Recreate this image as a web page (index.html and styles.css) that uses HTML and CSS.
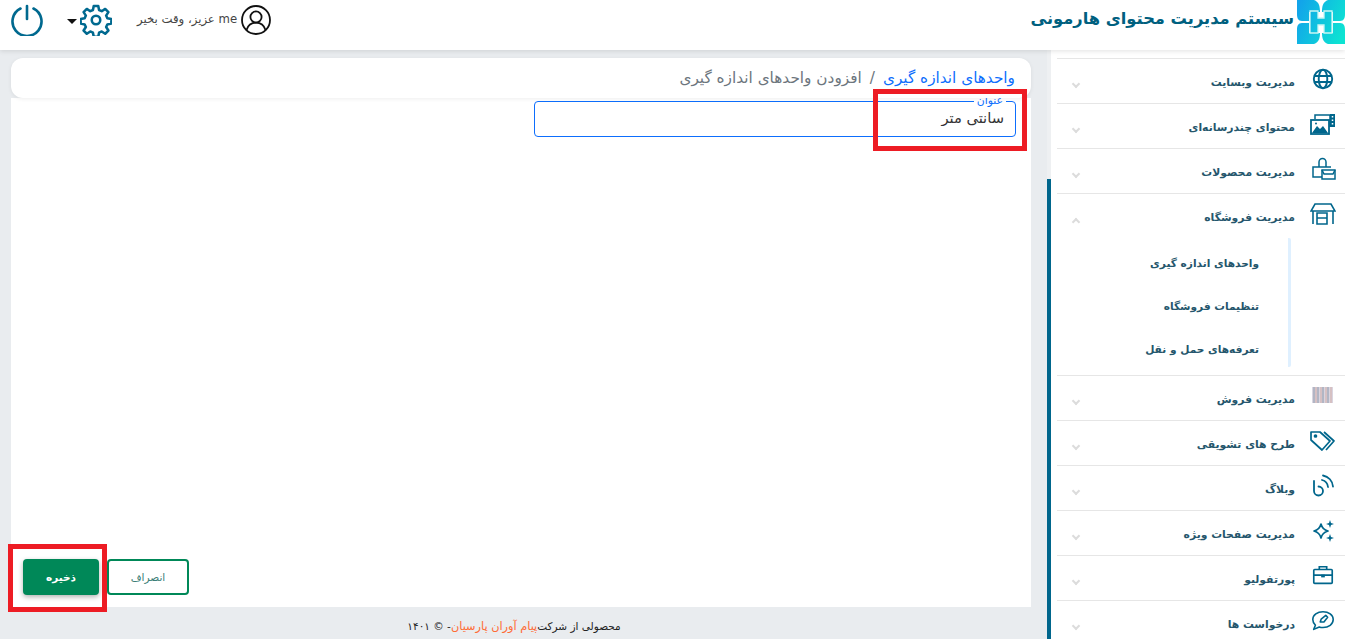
FILE: index.html
```html
<!DOCTYPE html>
<html lang="fa" dir="rtl">
<head>
    <meta charset="UTF-8">
    <meta name="viewport" content="width=device-width, initial-scale=1.0">
    <title>سیستم مدیریت محتوای هارمونی</title>
    <link rel="stylesheet" href="styles.css">
</head>
<body>
    <header class="topbar">
        <div class="brand">
            <svg class="brand-logo" viewBox="0 0 48 44">
                <defs>
                    <linearGradient id="logoGrad" gradientUnits="userSpaceOnUse" x1="0" y1="10" x2="48" y2="30">
                        <stop offset="0" stop-color="#12a4ea"/>
                        <stop offset="1" stop-color="#0de3d2"/>
                    </linearGradient>
                </defs>
                <path fill="url(#logoGrad)" d="M0 0H17C22 2 23 6 23 12H12V21H5C1 21 0 18 0 14Z"/>
                <path fill="url(#logoGrad)" d="M48 0H31C26 2 25 6 25 12H36V21H43C47 21 48 18 48 14Z"/>
                <path fill="url(#logoGrad)" d="M0 44H17C22 42 23 38 23 33H12V23H5C1 23 0 26 0 30Z"/>
                <path fill="url(#logoGrad)" d="M48 44H31C26 42 25 38 25 33H36V23H43C47 23 48 26 48 30Z"/>
                <path fill="url(#logoGrad)" stroke="#c9f6f4" stroke-width="1.300" d="M13 11H21V18H27V11H35V33H27V25H21V33H13Z"/>
            </svg>
            <span class="brand-name">سیستم مدیریت محتوای هارمونی</span>
        </div>
        <div class="top-tools">
            <div class="user-box">
                <svg class="user-icon" viewBox="0 0 30 30" fill="none" stroke="#111" stroke-width="1.800">
                    <circle cx="15" cy="15" r="14"/>
                    <circle cx="15" cy="12" r="5.600"/>
                    <path d="M5.500 25c1.500-5 5-7.400 9.500-7.400s8 2.400 9.500 7.400"/>
                </svg>
                <span class="user-text">me عزیز، وقت بخیر</span>
            </div>
            <svg class="gear-icon" viewBox="0 0 24 24" fill="none" stroke="#00698f" stroke-width="1.900" stroke-linejoin="round">
                <circle cx="12" cy="12" r="3.200"/>
                <path d="M10.300 1.500h3.400l.6 3 2 .9 2.600-1.700 2.400 2.400-1.700 2.600.9 2 3 .6v3.400l-3 .6-.9 2 1.700 2.600-2.400 2.400-2.600-1.700-2 .9-.6 3h-3.400l-.6-3-2-.9-2.600 1.700-2.400-2.400 1.700-2.600-.9-2-3-.6v-3.400l3-.6.9-2-1.700-2.600 2.400-2.400 2.600 1.700 2-.9z"/>
            </svg>
            <span class="caret"></span>
            <svg class="power-icon" viewBox="0 0 32 32" fill="none" stroke="#00698f" stroke-width="2.600" stroke-linecap="round">
                <path d="M16 2v13"/>
                <path d="M9.500 4.500a14.500 14.500 0 1 0 13 0"/>
            </svg>
        </div>
    </header>

    <div class="layout">
        <aside class="sidebar">
            <ul class="menu">
                <li class="menu-item">
                    <div class="menu-row">
                        <svg class="menu-icon" viewBox="0 0 24 24" fill="none" stroke="#00668c" stroke-width="1.900">
                            <circle cx="12" cy="12" r="9.200"/>
                            <ellipse cx="12" cy="12" rx="4.300" ry="9.200"/>
                            <path d="M3 9h18M3 15h18"/>
                        </svg>
                        <span class="menu-label">مدیریت وبسایت</span>
                        <span class="chev"></span>
                    </div>
                </li>
                <li class="menu-item">
                    <div class="menu-row">
                        <svg class="menu-icon" viewBox="0 0 26 24" fill="none" stroke="#00668c" stroke-width="1.500">
                            <path d="M5 7V3h15v12"/>
                            <rect x="20" y="2" width="5" height="13" fill="#00668c" stroke="none"/>
                            <path stroke="#fff" stroke-width="1.500" stroke-dasharray="1.500 2" d="M22.500 4v10"/>
                            <rect x="1" y="8" width="18" height="14" fill="#fff" stroke-width="1.800"/>
                            <path fill="#00668c" stroke="none" d="M2 21l5-7 3 3 3-3 5 7z"/>
                            <circle cx="6" cy="11.500" r="1" fill="#00668c" stroke="none"/>
                        </svg>
                        <span class="menu-label">محتوای چندرسانه‌ای</span>
                        <span class="chev"></span>
                    </div>
                </li>
                <li class="menu-item">
                    <div class="menu-row">
                        <svg class="menu-icon" viewBox="0 0 26 24" fill="none" stroke="#00668c" stroke-width="1.500">
                            <path d="M9 10V5a3.500 3.500 0 0 1 7 0v5"/>
                            <path d="M12 20H3V10h18"/>
                            <path d="M12 13h13v9H12z"/>
                            <path d="M12 13l2 4h9l2-4"/>
                        </svg>
                        <span class="menu-label">مدیریت محصولات</span>
                        <span class="chev"></span>
                    </div>
                </li>
                <li class="menu-item">
                    <div class="menu-row">
                        <svg class="menu-icon" viewBox="0 0 26 24" fill="none" stroke="#00668c" stroke-width="1.600">
                            <path d="M5 2h16l4 7H1z"/>
                            <path d="M3 9v13M23 9v13"/>
                            <path d="M7 22V11h10v11zM7 16h10"/>
                        </svg>
                        <span class="menu-label">مدیریت فروشگاه</span>
                        <span class="chev chev-up"></span>
                    </div>
                    <ul class="submenu">
                        <li>واحدهای اندازه گیری</li>
                        <li>تنظیمات فروشگاه</li>
                        <li>تعرفه‌های حمل و نقل</li>
                    </ul>
                </li>
                <li class="menu-item">
                    <div class="menu-row">
                        <svg class="menu-icon" viewBox="-2 -3 26 24">
                            <rect x="0" y="0" width="21" height="16" fill="#d9d5e0"/>
                            <path stroke-width="1" fill="none" stroke="#8a97aa" d="M2 0v16M6 0v16M11 0v16M16 0v16"/>
                            <path stroke-width="1" fill="none" stroke="#d3aca6" d="M4 0v16M9 0v16M14 0v16M19 0v16"/>
                        </svg>
                        <span class="menu-label">مدیریت فروش</span>
                        <span class="chev"></span>
                    </div>
                </li>
                <li class="menu-item">
                    <div class="menu-row">
                        <svg class="menu-icon" viewBox="0 0 26 22" fill="none" stroke="#00668c" stroke-width="1.700" stroke-linejoin="round">
                            <path d="M1 2h9l10 9-8 9-11-10z"/>
                            <path d="M14 2l10 9-8 9"/>
                            <circle cx="5.500" cy="6" r="1" fill="#00668c"/>
                        </svg>
                        <span class="menu-label">طرح های تشویقی</span>
                        <span class="chev"></span>
                    </div>
                </li>
                <li class="menu-item">
                    <div class="menu-row">
                        <svg class="menu-icon" viewBox="-2 0 26 24" fill="none" stroke="#00668c" stroke-width="1.800" stroke-linecap="round">
                            <path d="M2 7v10a4.500 4.500 0 1 0 4.500-4.500"/>
                            <path d="M10 6a8 8 0 0 1 6 7M11 1.500a12 12 0 0 1 10 11"/>
                        </svg>
                        <span class="menu-label">وبلاگ</span>
                        <span class="chev"></span>
                    </div>
                </li>
                <li class="menu-item">
                    <div class="menu-row">
                        <svg class="menu-icon" viewBox="-2 -1 26 24" fill="none" stroke="#00668c" stroke-width="1.700" stroke-linejoin="round">
                            <path d="M9 4c1 4 3 6 7 7-4 1-6 3-7 7-1-4-3-6-7-7 4-1 6-3 7-7z"/>
                            <path fill="#00668c" stroke="none" d="M18 0l1 3 3 1-3 1-1 3-1-3-3-1 3-1zM18 14l1 3 3 1-3 1-1 3-1-3-3-1 3-1z"/>
                        </svg>
                        <span class="menu-label">مدیریت صفحات ویژه</span>
                        <span class="chev"></span>
                    </div>
                </li>
                <li class="menu-item">
                    <div class="menu-row">
                        <svg class="menu-icon" viewBox="-2 -2 28 26" fill="none" stroke="#00668c" stroke-width="1.800">
                            <rect x="2" y="4" width="20" height="15" rx="1"/>
                            <path d="M8 4V1h8v3M2 10h20"/>
                            <path stroke-width="3" d="M10 11h4"/>
                        </svg>
                        <span class="menu-label">پورتفولیو</span>
                        <span class="chev"></span>
                    </div>
                </li>
                <li class="menu-item">
                    <div class="menu-row">
                        <svg class="menu-icon" viewBox="-2 -1 28 24" fill="none" stroke="#00668c" stroke-width="1.700" stroke-linejoin="round">
                            <path d="M12 1c6 0 11 3.500 11 8.500S18 18 12 18c-1.500 0-3-.2-4-.6L2 20l1.800-4.500C2 14 1 12 1 9.500 1 4.500 6 1 12 1z"/>
                            <path d="M9 12l1-3 5-4 2 2-4 5z"/>
                        </svg>
                        <span class="menu-label">درخواست ها</span>
                        <span class="chev"></span>
                    </div>
                </li>
            </ul>
            <div class="scroll-track"><div class="scroll-thumb"></div></div>
        </aside>

        <div class="main">
            <nav class="crumbs">
                <a class="crumb-link" href="#">واحدهای اندازه گیری</a>
                <span class="crumb-sep">/</span>
                <span class="crumb-current">افزودن واحدهای اندازه گیری</span>
            </nav>
            <section class="panel">
                <div class="field">
                    <span class="field-label">عنوان</span>
                    <input class="field-input" type="text" value="سانتی متر">
                </div>
                <div class="actions">
                    <button class="btn btn-outline">انصراف</button>
                    <button class="btn btn-save">ذخیره</button>
                </div>
            </section>
            <footer class="foot">
                <span>محصولی از شرکت</span><span class="foot-company">پیام آوران پارسیان</span><span>- © ۱۴۰۱</span>
            </footer>
        </div>
    </div>

    <div class="mark mark-field"></div>
    <div class="mark mark-save"></div>
</body>
</html>
```

FILE: styles.css
```css
* {
    box-sizing: border-box;
    margin: 0;
    padding: 0;
}

html, body {
    height: 100%;
    overflow: hidden;
}

body {
    position: relative;
    font-family: "DejaVu Sans", "Noto Sans", sans-serif;
    background-color: #e9ecef;
    color: #333;
    display: flex;
    flex-direction: column;
}

.topbar {
    height: 50px;
    flex: none;
    background-color: #fff;
    display: flex;
    justify-content: space-between;
    box-shadow: 0 1px 5px rgba(0, 0, 0, 0.12);
    position: relative;
    z-index: 2;
}

.brand {
    display: flex;
    align-items: flex-start;
    gap: 3px;
}

.brand-logo {
    width: 48px;
    height: 44px;
}

.brand-name {
    font-size: 16.300px;
    font-weight: bold;
    color: #00607f;
    margin-top: 9px;
}

.top-tools {
    display: flex;
    align-items: flex-start;
    padding-left: 11px;
}

.user-box {
    display: flex;
    align-items: center;
    gap: 4px;
    margin-top: 5px;
    margin-left: 25px;
}

.user-icon {
    width: 30px;
    height: 30px;
}

.user-text {
    font-size: 11.700px;
    color: #444;
    margin-bottom: 3px;
}

.gear-icon {
    width: 32px;
    height: 32px;
    margin-top: 4px;
}

.caret {
    width: 0;
    height: 0;
    margin: 19px 3px 0 24px;
    border-top: 5px solid #111;
    border-left: 5px solid transparent;
    border-right: 5px solid transparent;
}

.power-icon {
    width: 32px;
    height: 32px;
    margin-top: 4px;
}

.layout {
    flex: 1;
    min-height: 0;
    display: flex;
}

.sidebar {
    width: 298px;
    flex: none;
    background-color: #fff;
    position: relative;
    overflow: hidden;
    padding: 8px 0 0 10px;
}

.scroll-track {
    position: absolute;
    left: 0;
    top: 0;
    bottom: 0;
    width: 4px;
    background-color: #eef0f2;
}

.scroll-thumb {
    margin-top: 129px;
    height: 100%;
    background-color: #00668c;
}

.menu {
    list-style: none;
}

.menu-item {
    border-top: 1px solid #e6e6e6;
}

.menu-row {
    height: 44px;
    display: flex;
    align-items: center;
    padding: 2px 9px 0 0;
    position: relative;
}

.menu-icon {
    width: 26px;
    height: 24px;
    flex: none;
    margin-top: -6px;
}

.menu-label {
    font-size: 10.800px;
    font-weight: bold;
    color: #25566c;
    margin-right: 15px;
}

.chev {
    position: absolute;
    left: 16px;
    top: 22px;
    width: 6px;
    height: 6px;
    border-right: 2px solid #dcdcdc;
    border-bottom: 2px solid #dcdcdc;
    transform: rotate(45deg);
}

.chev-up {
    top: 25px;
    transform: rotate(225deg);
}

.submenu {
    list-style: none;
    height: 129px;
    margin: 0 54px 8px 0;
    border-right: 3px solid #dff0ff;
    border-radius: 2px;
    padding: 4px 29px 0 0;
    font-size: 10.600px;
    font-weight: bold;
    color: #25566c;
}

.submenu li {
    height: 43px;
    line-height: 43px;
}

.main {
    flex: 1;
    min-width: 0;
    display: flex;
    flex-direction: column;
    padding: 8px 16px 0 11px;
}

.crumbs {
    height: 40px;
    flex: none;
    background-color: #fff;
    border-radius: 12px;
    box-shadow: 0 1px 4px rgba(0, 0, 0, 0.07);
    padding: 0 16px;
    display: flex;
    align-items: center;
    gap: 8px;
    font-size: 15.300px;
    position: relative;
    z-index: 1;
}

.crumb-link {
    color: #0d6efd;
    text-decoration: none;
}

.crumb-sep, .crumb-current {
    color: #6c757d;
}

.panel {
    flex: 1;
    min-height: 0;
    background-color: #fff;
    display: flex;
    flex-direction: column;
    padding: 3px 15px 12px 12px;
}

.field {
    width: 482px;
    position: relative;
}

.field-input {
    width: 100%;
    height: 36px;
    border: 1px solid #0d6efd;
    border-radius: 4px;
    padding: 0 11px 4px;
    font-family: inherit;
    font-size: 14.700px;
    color: #333;
    outline: none;
}

.field-label {
    position: absolute;
    top: -6px;
    right: 10px;
    background-color: #fff;
    padding: 0 3px;
    font-size: 10.800px;
    line-height: 12px;
    color: #0d6efd;
}

.actions {
    margin-top: auto;
    display: flex;
    justify-content: flex-end;
    gap: 8px;
}

.btn {
    height: 36px;
    border-radius: 4px;
    font-family: inherit;
    font-size: 10.500px;
    cursor: pointer;
}

.btn-outline {
    width: 82px;
    background-color: #fff;
    border: 2px solid #008858;
    color: #3d7f78;
}

.btn-save {
    width: 76px;
    background-color: #008858;
    border: none;
    color: #fff;
    font-weight: bold;
    box-shadow: 0 2px 5px rgba(0, 0, 0, 0.3);
}

.foot {
    height: 32px;
    flex: none;
    display: flex;
    align-items: center;
    justify-content: center;
    font-size: 10.500px;
    color: #222;
    padding: 6px 14px 0 0;
}

.foot-company {
    color: #ff6b35;
    font-size: 11.300px;
}

/* red annotation boxes drawn over the screenshot */
.mark {
    position: absolute;
    border: 5px solid #ed1c24;
    z-index: 5;
}

.mark-field {
    left: 873px;
    top: 89px;
    width: 154px;
    height: 62px;
}

.mark-save {
    left: 8px;
    top: 544px;
    width: 99px;
    height: 68px;
}
```
